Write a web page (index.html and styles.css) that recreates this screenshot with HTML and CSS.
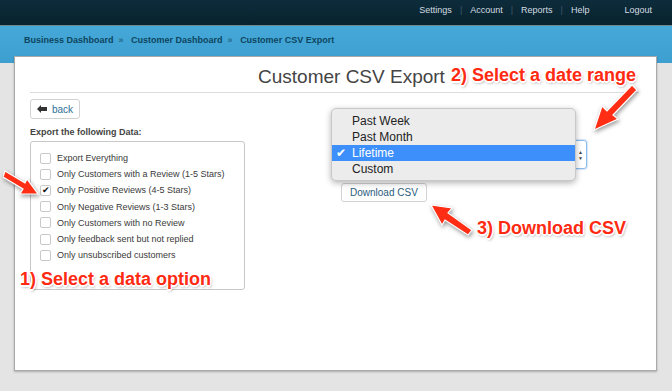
FILE: index.html
```html
<!DOCTYPE html>
<html lang="en">
<head>
    <meta charset="UTF-8">
    <title>Customer CSV Export</title>
    <link rel="stylesheet" href="styles.css">
</head>
<body>
    <div class="topbar">
        <a href="#">Settings</a><span class="sep">|</span>
        <a href="#">Account</a><span class="sep">|</span>
        <a href="#">Reports</a><span class="sep">|</span>
        <a href="#">Help</a>
        <a href="#" class="logout">Logout</a>
    </div>

    <div class="crumbs">
        <a href="#">Business Dashboard</a><span class="raquo">&raquo;</span>
        <a href="#">Customer Dashboard</a><span class="raquo">&raquo;</span>
        <a href="#">Customer CSV Export</a>
    </div>

    <div class="panel">
        <h2 class="title">Customer CSV Export</h2>

        <div class="columns">
            <div class="left-col">
                <button class="btn back-btn">
                    <svg width="10" height="8" viewBox="0 0 10 8"><path d="M0 4 L4 0 L4 2 L10 2 L10 6 L4 6 L4 8 Z" fill="#333"/></svg>
                    back
                </button>
                <div class="label">Export the following Data:</div>
                <div class="options">
                    <label class="option"><span class="box"></span>Export Everything</label>
                    <label class="option"><span class="box"></span>Only Customers with a Review (1-5 Stars)</label>
                    <label class="option"><span class="box checked">&#10004;</span>Only Positive Reviews (4-5 Stars)</label>
                    <label class="option"><span class="box"></span>Only Negative Reviews (1-3 Stars)</label>
                    <label class="option"><span class="box"></span>Only Customers with no Review</label>
                    <label class="option"><span class="box"></span>Only feedback sent but not replied</label>
                    <label class="option"><span class="box"></span>Only unsubscribed customers</label>
                </div>
            </div>

            <div class="right-col">
                <div class="select-wrap">
                    <div class="select">
                        <span class="updown">&#9650;<br>&#9660;</span>
                    </div>
                    <ul class="menu">
                        <li>Past Week</li>
                        <li>Past Month</li>
                        <li class="active"><span class="tick">&#10004;</span>Lifetime</li>
                        <li>Custom</li>
                    </ul>
                </div>
                <button class="btn download-btn">Download CSV</button>
            </div>
        </div>

        <!-- annotations drawn over the screenshot -->
        <div class="note note-1">1) Select a data option</div>
        <div class="note note-2">2) Select a date range</div>
        <div class="note note-3">3) Download CSV</div>

        <svg class="arrow arrow-1" width="40" height="32" viewBox="0 0 40 32">
            <path d="M2 3 L22 15 L24 11 L35 26 L17 26 L20 21 L0 9 Z" fill="#ff2d14" stroke="#fff" stroke-width="1.2"/>
        </svg>
        <svg class="arrow arrow-2" width="46" height="48" viewBox="0 0 46 48">
            <path d="M40 1 L45 6 L21 31 L26 35 L2 46 L10 22 L15 27 Z" fill="#ff2d14" stroke="#fff" stroke-width="1.2"/>
        </svg>
        <svg class="arrow arrow-3" width="44" height="34" viewBox="0 0 44 34">
            <path d="M43 27 L39 32 L16 17 L13 22 L2 2 L23 5 L19 10 Z" fill="#ff2d14" stroke="#fff" stroke-width="1.2"/>
        </svg>
    </div>
    <div class="page-foot"></div>
</body>
</html>
```

FILE: styles.css
```css
* {
    margin: 0;
    padding: 0;
    box-sizing: border-box;
}

html {
    background: #e4e4e4;
}

body {
    font-family: "Liberation Sans", Arial, sans-serif;
    background: #e4e4e4;
    color: #333;
    width: 672px;
    height: 391px;
    display: flex;
    flex-direction: column;
}

a {
    text-decoration: none;
}

.topbar {
    flex: none;
    height: 26px;
    background: linear-gradient(#0d2c3b, #08222e);
    border-bottom: 1px solid #6d8794;
    display: flex;
    align-items: flex-start;
    justify-content: flex-end;
    padding: 5px 20px 0 0;
    font-size: 9px;
}

.topbar a {
    color: #d4dde2;
}

.topbar .sep {
    color: #3f5866;
    margin: 0 8px;
}

.topbar .logout {
    margin-left: 35px;
}

.crumbs {
    flex: none;
    height: 37px;
    background: linear-gradient(#45a8d8, #3c9fd0);
    padding: 9px 0 0 24px;
    font-size: 9px;
    font-weight: bold;
}

.crumbs a {
    color: #0e4560;
}

.crumbs .raquo {
    color: #24698a;
    margin: 0 5px;
}

.panel {
    flex: none;
    position: relative;
    margin: -7px 15px 0 14px;
    height: 315px;
    background: #fff;
    border: 1px solid #a9a9a9;
    box-shadow: 0 1px 2px rgba(0, 0, 0, 0.25);
    padding: 0 17px 0 15px;
}

.page-foot {
    flex: 1;
    background: #e4e4e4;
}

.title {
    font-size: 19px;
    font-weight: normal;
    color: #444;
    padding: 9px 0 5px 228px;
    border-bottom: 1px solid #dcdcdc;
    line-height: 21px;
}

.columns {
    display: flex;
    padding-top: 6px;
}

.left-col {
    width: 215px;
}

.btn {
    font-family: "Liberation Sans", Arial, sans-serif;
    background: #fff;
    border: 1px solid #d2d2d2;
    border-radius: 3px;
    cursor: pointer;
}

.back-btn {
    height: 20px;
    padding: 0 6px 0 6px;
    font-size: 10px;
    color: #2d6f99;
    display: flex;
    align-items: center;
    gap: 5px;
}

.label {
    font-size: 9px;
    font-weight: bold;
    color: #444;
    margin: 8px 0 4px;
}

.options {
    border: 1px solid #c8c8c8;
    border-radius: 3px;
    height: 149px;
    padding: 8px 0 0 9px;
}

.option {
    display: flex;
    align-items: center;
    height: 16.2px;
    font-size: 9px;
    color: #3a3a3a;
}

.box {
    width: 11px;
    height: 11px;
    border: 1px solid #c9c9c9;
    border-radius: 2px;
    margin-right: 6px;
    font-size: 9px;
    line-height: 9px;
    text-align: center;
    color: #111;
}

.right-col {
    margin-left: 96px;
    padding-top: 41px;
}

.select-wrap {
    position: relative;
    width: 246px;
}

.select {
    height: 29px;
    border: 1px solid #8cbcec;
    border-radius: 3px;
    box-shadow: 0 0 2px #6aa6e6;
    display: flex;
    align-items: center;
    justify-content: flex-end;
    padding: 0 3px 0 10px;
}

.updown {
    font-size: 5px;
    line-height: 6px;
    color: #444;
}

.menu {
    position: absolute;
    left: -10px;
    top: -32px;
    width: 245px;
    height: 73px;
    list-style: none;
    background: #ececec;
    border: 1px solid #c8c8c8;
    border-radius: 5px;
    box-shadow: 0 2px 6px rgba(0, 0, 0, 0.3);
    padding-top: 4px;
    font-size: 12px;
    color: #222;
}

.menu li {
    height: 16px;
    line-height: 16px;
    padding-left: 20px;
    position: relative;
}

.menu li.active {
    background: #3d8ffb;
    color: #fff;
}

.menu .tick {
    position: absolute;
    left: 4px;
    font-size: 12px;
}

.download-btn {
    margin-top: 14px;
    height: 19px;
    padding: 0 8px;
    font-size: 10px;
    color: #2a5c7c;
}

.note {
    position: absolute;
    font-size: 18px;
    font-weight: bold;
    color: #ff2a12;
    white-space: nowrap;
    text-shadow: -1px -1px 0 #fff, 1px -1px 0 #fff, -1px 1px 0 #fff, 1px 1px 0 #fff,
                 0 -1.5px 0 #fff, 0 1.5px 0 #fff, -1.5px 0 0 #fff, 1.5px 0 0 #fff,
                 1px 2px 3px rgba(0, 0, 0, 0.45);
}

.note-1 { left: 5px; top: 212px; }
.note-2 { left: 436px; top: 8px; }
.note-3 { left: 462px; top: 161px; }

.arrow {
    position: absolute;
    filter: drop-shadow(1px 2px 2px rgba(0, 0, 0, 0.4));
}

.arrow-1 { left: -12px; top: 111px; }
.arrow-2 { left: 577px; top: 27px; }
.arrow-3 { left: 414px; top: 146px; }
```
